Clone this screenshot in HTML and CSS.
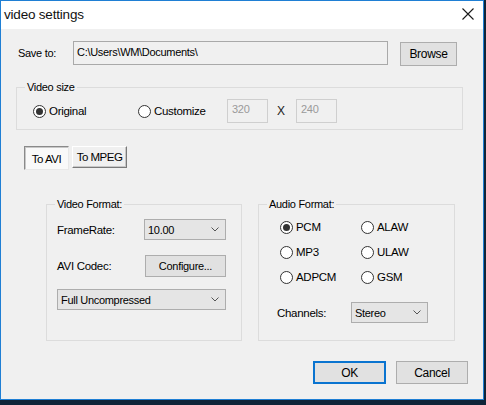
FILE: index.html
```html
<!DOCTYPE html>
<html>
<head>
<meta charset="utf-8">
<link rel="stylesheet" href="styles.css">
</head>
<body>
<div class="window">
  <div class="titlebar">
    <span class="title">video settings</span>
    <svg class="close" width="12" height="12" viewBox="0 0 12 12"><path d="M0.5 0.5 L11.5 11.5 M11.5 0.5 L0.5 11.5" stroke="#1a1a1a" stroke-width="1.1" fill="none"/></svg>
  </div>
  <div class="content">
    <div class="save-row">
      <span class="save-label">Save to:</span>
      <div class="path-box">C:\Users\WM\Documents\</div>
      <div class="btn browse">Browse</div>
    </div>

    <fieldset class="group size-group">
      <legend>Video size</legend>
      <div class="size-row">
        <div class="radio-item orig"><span class="radio checked"></span>Original</div>
        <div class="radio-item cust"><span class="radio"></span>Customize</div>
        <div class="num-box">320</div>
        <span class="times">X</span>
        <div class="num-box second">240</div>
      </div>
    </fieldset>

    <div class="tabs">
      <div class="tab active">To AVI</div>
      <div class="tab">To MPEG</div>
    </div>

    <div class="formats">
      <fieldset class="group video-group">
        <legend>Video Format:</legend>
        <div class="vrow first">
          <span class="vlabel">FrameRate:</span>
          <div class="select rate"><span>10.00</span><svg width="8" height="5" viewBox="0 0 8 5"><path d="M0.5 0.5 L4 4 L7.5 0.5" stroke="#555" fill="none"/></svg></div>
        </div>
        <div class="vrow codec">
          <span class="vlabel">AVI Codec:</span>
          <div class="btn configure">Configure...</div>
        </div>
        <div class="vrow full">
          <div class="select wide"><span>Full Uncompressed</span><svg width="8" height="5" viewBox="0 0 8 5"><path d="M0.5 0.5 L4 4 L7.5 0.5" stroke="#555" fill="none"/></svg></div>
        </div>
      </fieldset>

      <fieldset class="group audio-group">
        <legend>Audio Format:</legend>
        <div class="arow first">
          <div class="radio-item acol"><span class="radio checked"></span>PCM</div>
          <div class="radio-item"><span class="radio"></span>ALAW</div>
        </div>
        <div class="arow">
          <div class="radio-item acol"><span class="radio"></span>MP3</div>
          <div class="radio-item"><span class="radio"></span>ULAW</div>
        </div>
        <div class="arow">
          <div class="radio-item acol"><span class="radio"></span>ADPCM</div>
          <div class="radio-item"><span class="radio"></span>GSM</div>
        </div>
        <div class="chan-row">
          <span class="chan-label">Channels:</span>
          <div class="select chan"><span>Stereo</span><svg width="8" height="5" viewBox="0 0 8 5"><path d="M0.5 0.5 L4 4 L7.5 0.5" stroke="#555" fill="none"/></svg></div>
        </div>
      </fieldset>
    </div>

    <div class="footer">
      <div class="btn ok">OK</div>
      <div class="btn cancel">Cancel</div>
    </div>
  </div>
</div>
</body>
</html>
```

FILE: styles.css
```css
* { box-sizing: border-box; }
html, body { margin: 0; padding: 0; }
body {
  background: #0f2438;
  width: 486px;
  height: 405px;
  overflow: hidden;
  font-family: "Liberation Sans", Arial, sans-serif;
  font-size: 11px;
  letter-spacing: -0.3px;
  color: #000;
}
.window {
  width: 484px;
  height: 400px;
  border: 1px solid #1f7fd4;
  background: #f0f0f0;
  display: flex;
  flex-direction: column;
}
.titlebar {
  height: 28px;
  background: #fff;
  display: flex;
  align-items: center;
  justify-content: space-between;
  padding: 0 9px 0 3px;
}
.title {
  font-size: 13.5px;
  letter-spacing: -0.2px;
  color: #111;
  margin-top: -2px;
}
.close { margin-top: -2px; }
.content {
  display: flex;
  flex-direction: column;
}
.save-row {
  display: flex;
  align-items: flex-start;
  margin-top: 12px;
  height: 25px;
}
.save-label {
  width: 55px;
  margin-left: 17px;
  line-height: 24px;
}
.path-box {
  width: 315px;
  height: 24px;
  border: 1px solid #a9a9a9;
  background: #f0f0f0;
  padding-left: 3px;
  line-height: 20px;
}
.btn {
  background: #e1e1e1;
  border: 1px solid #adadad;
  display: flex;
  align-items: center;
  justify-content: center;
}
.browse {
  margin-left: 12px;
  margin-top: 1px;
  width: 57px;
  height: 24px;
  font-size: 12px;
}
.group {
  margin: 0;
  padding: 0;
  min-width: 0;
  border: 1px solid #dcdcdc;
}
.group legend {
  margin-left: 8px;
  padding: 0 2px;
  line-height: 13px;
}
.size-group {
  margin-top: 15px;
  margin-left: 15px;
  width: 447px;
  padding-bottom: 6px;
}
.size-row {
  display: flex;
  align-items: center;
  height: 24px;
  margin-top: 5px;
}
.radio-item {
  display: flex;
  align-items: center;
  font-size: 11.5px;
}
.radio {
  width: 13px;
  height: 13px;
  border: 1px solid #333;
  border-radius: 50%;
  background: #fff;
  margin-right: 3px;
  display: flex;
  align-items: center;
  justify-content: center;
}
.radio.checked::after {
  content: "";
  width: 7px;
  height: 7px;
  border-radius: 50%;
  background: #333;
}
.orig { margin-left: 16px; width: 105px; }
.cust { width: 89px; }
.num-box {
  width: 41px;
  height: 24px;
  border: 1px solid #cfcfcf;
  background: #f0f0f0;
  color: #9a9a9a;
  padding: 3px 0 0 4px;
}
.times { margin-left: 9px; width: 8px; font-size: 12px; color: #222; }
.num-box.second { margin-left: 11px; }
.tabs {
  display: flex;
  align-items: flex-start;
  margin-top: 16px;
  margin-left: 23px;
  height: 24px;
}
.tab {
  width: 55px;
  height: 22px;
  display: flex;
  align-items: center;
  justify-content: center;
  background: #f0f0f0;
  border: 1px solid;
  border-color: #fff #7a7a7a #7a7a7a #fff;
  box-shadow: inset -1px -1px 0 #c8c8c8;
  font-size: 11.5px;
  letter-spacing: -0.5px;
}
.tab.active {
  width: 45px;
  height: 24px;
  background: #f9f9f9;
  border-color: #8a8a8a #e8e8e8 #e8e8e8 #8a8a8a;
  box-shadow: inset 1px 1px 0 #c8c8c8;
  margin-right: 3px;
  padding-top: 2px;
}
.formats {
  display: flex;
  margin-top: 28px;
  margin-left: 45px;
  align-items: flex-start;
}
.video-group {
  width: 196px;
  height: 143px;
}
.audio-group {
  width: 197px;
  height: 143px;
  margin-left: 16px;
}
.vrow {
  display: flex;
  align-items: center;
  padding-left: 10px;
}
.vrow.first { margin-top: 8px; height: 21px; }
.vrow.codec { margin-top: 15px; height: 22px; }
.vrow.full { margin-top: 12px; height: 21px; }
.vlabel { width: 87px; font-size: 11.5px; }
.select {
  height: 21px;
  background: #e5e5e5;
  border: 1px solid #adadad;
  display: flex;
  align-items: center;
  justify-content: space-between;
  padding: 0 6px 0 3px;
}
.rate { width: 82px; }
.wide { width: 169px; }
.configure { width: 81px; height: 22px; margin-left: 1px; }
.arow {
  display: flex;
  align-items: center;
  height: 16px;
  margin-top: 9px;
  padding-left: 21px;
}
.arow.first { margin-top: 8px; }
.acol { width: 81px; }
.chan-row {
  display: flex;
  align-items: center;
  height: 21px;
  margin-top: 17px;
  padding-left: 18px;
}
.chan-label { width: 74px; font-size: 11.5px; }
.chan { width: 77px; }
.footer {
  display: flex;
  justify-content: flex-end;
  margin-top: 20px;
  margin-right: 15px;
}
.ok {
  width: 73px;
  height: 23px;
  border: 2px solid #0a74d0;
  margin-right: 10px;
  font-size: 12px;
}
.cancel {
  width: 72px;
  height: 23px;
  font-size: 12px;
}
```
